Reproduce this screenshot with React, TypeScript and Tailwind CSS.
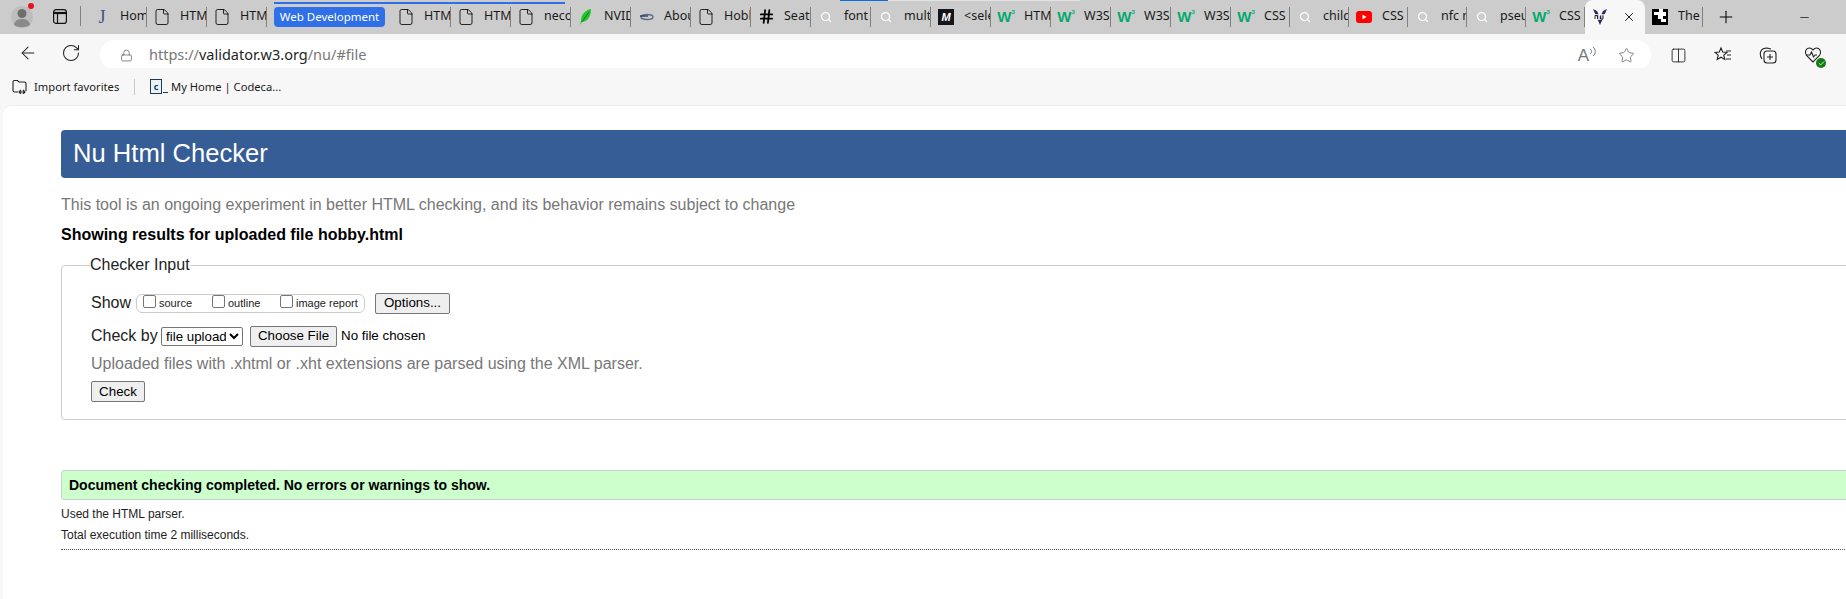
import React from 'react';
import { ArrowLeft, RotateCw, File, Search, Hash, Plus, X, Minus, Star, Columns2, Lock, Check } from 'lucide-react';

function W3Icon() {
  return (
    <span className="w-[16px] flex items-start justify-center text-[#04aa6d] font-['Liberation_Sans',sans-serif] font-bold leading-none">
      <span className="text-[15px]">W</span>
      <span className="text-[6px]">3</span>
    </span>
  );
}

function DocIcon() {
  return <File size={18} strokeWidth={1.1} className="text-black" />;
}

function SearchIcon() {
  return <Search size={12} strokeWidth={2.5} className="text-white" />;
}

function LeafIcon() {
  return (
    <svg width="16" height="18" viewBox="0 0 16 18">
      <path d="M13 1C7 2 3 7 3 13l-1 4 2-3c5 0 9-5 9-13z" fill="#22c52e" />
      <path d="M11 4 4 14" stroke="#0d7a17" strokeWidth="1" />
    </svg>
  );
}

function NvidiaIcon() {
  return (
    <svg width="16" height="8" viewBox="0 0 16 8">
      <ellipse cx="9" cy="4" rx="6" ry="2.5" fill="none" stroke="#5d6f8c" strokeWidth="1.4" />
      <path d="M2 3h8" stroke="#28405f" strokeWidth="1.4" />
    </svg>
  );
}

function JIcon() {
  return <span className="w-[16px] text-center text-[18px] leading-none text-[#3b5580] font-['Liberation_Serif',serif]">J</span>;
}

function MdnIcon() {
  return <span className="w-[16px] h-[16px] bg-[#15141a] text-white italic font-bold text-[11px] leading-[16px] text-center font-['Liberation_Sans',sans-serif]">M</span>;
}

function YoutubeIcon() {
  return (
    <svg width="16" height="12" viewBox="0 0 16 12">
      <rect width="16" height="12" rx="3" fill="#f00" />
      <path d="M6.5 3.5v5l4-2.5z" fill="#fff" />
    </svg>
  );
}

function NuIcon() {
  return (
    <svg width="16" height="18" viewBox="0 0 16 18">
      <path d="M1 1l7 16 7-16-4 2-3 6-3-6z" fill="#2c2a6b" />
      <rect x="1" y="6" width="14" height="6" fill="#fff" opacity="0.75" />
      <path d="M3 11V7.5h2.5V11M8.5 7.5V11H11V7.5" fill="none" stroke="#222" strokeWidth="1" />
    </svg>
  );
}

function PuzzleIcon() {
  return (
    <svg width="16" height="16" viewBox="0 0 16 16">
      <rect width="16" height="16" fill="#000" />
      <path d="M7 0h4v3h3v4h-3v3h3v3H9v-3H6V6H2V3h5z" fill="#fff" />
    </svg>
  );
}

function Tab({ icon, title, w = 'w-[60px]' }: { icon: React.ReactNode; title: string; w?: string }) {
  return (
    <div className={`${w} h-[34px] shrink-0 flex items-center pb-[1px]`}>
      <div className="w-[30px] mr-[3px] shrink-0 flex items-center justify-center">{icon}</div>
      <div className="flex-1 overflow-hidden whitespace-nowrap text-[12.5px] text-[#1a1a1a]">{title}</div>
      <div className="w-[1px] h-[20px] bg-[#808080] shrink-0" />
    </div>
  );
}

function TabStrip() {
  return (
    <div className="h-[34px] bg-[#cccccc] flex items-center font-['Noto_Sans',sans-serif] relative">
      {/* loading bar over the tab below */}
      <span className="absolute left-[840px] top-0 w-[48px] h-[1px] bg-[#0a6fd8]" />
      <span className="absolute left-[888px] top-0 w-[192px] h-[1px] bg-[#e4e4e4]" />
      <div className="w-[44px] flex justify-center relative">
        <svg width="22" height="24" viewBox="0 0 22 24">
          <circle cx="11" cy="12" r="11" fill="#bdbdbd" />
          <circle cx="11" cy="8.5" r="4.5" fill="#6e6e6e" />
          <path d="M3 20c1-5 4-6 8-6s7 1 8 6c-4 3-12 3-16 0z" fill="#8a8a8a" />
        </svg>
        <span className="absolute left-[28px] top-[-2px] w-[6px] h-[6px] rounded-full bg-[#e81123]" />
      </div>
      <div className="w-[43px] flex items-center pl-[9px] pb-[2px]">
        <svg width="14" height="15" viewBox="0 0 14 15" fill="none" stroke="#111" strokeWidth="1.2">
          <rect x="0.6" y="0.6" width="12.8" height="13.8" rx="2.5" />
          <path d="M0.6 4h12.8" strokeWidth="2.2" />
          <path d="M4.5 4v10.4" />
        </svg>
        <span className="w-[1px] h-[20px] bg-[#808080] ml-[13px]" />
      </div>
      <Tab icon={<JIcon />} title="Hom" />
      <Tab icon={<DocIcon />} title="HTM" />
      <Tab icon={<DocIcon />} title="HTM" />
      <div className="w-[124px] h-[34px] shrink-0 relative flex items-start pl-[7px] pt-[7px]">
        <span className="h-[20px] w-[111px] rounded-[4px] bg-[#2f6fe8] text-white text-[11.5px] leading-[20px] text-center whitespace-nowrap">Web Development</span>
        <span className="absolute left-[7px] top-[2px] w-[291px] h-[2px] bg-[#2f6fe8]" />
      </div>
      <Tab icon={<DocIcon />} title="HTM" />
      <Tab icon={<DocIcon />} title="HTM" />
      <Tab icon={<DocIcon />} title="neco" />
      <Tab icon={<LeafIcon />} title="NVID" />
      <Tab icon={<NvidiaIcon />} title="Abou" />
      <Tab icon={<DocIcon />} title="Hobb" />
      <Tab icon={<Hash size={17} strokeWidth={2.5} className="text-black" />} title="Seatt" />
      <Tab icon={<SearchIcon />} title="font s" />
      <Tab icon={<SearchIcon />} title="multi" />
      <Tab icon={<MdnIcon />} title="<sele" />
      <Tab icon={<W3Icon />} title="HTM" />
      <Tab icon={<W3Icon />} title="W3S" />
      <Tab icon={<W3Icon />} title="W3S" />
      <Tab icon={<W3Icon />} title="W3S" />
      <Tab icon={<W3Icon />} title="CSS" w="w-[59px]" />
      <Tab icon={<SearchIcon />} title="child" w="w-[59px]" />
      <Tab icon={<YoutubeIcon />} title="CSS" w="w-[59px]" />
      <Tab icon={<SearchIcon />} title="nfc n" w="w-[59px]" />
      <Tab icon={<SearchIcon />} title="pseu" w="w-[59px]" />
      <Tab icon={<W3Icon />} title="CSS" w="w-[59px]" />
      <div className="w-[60px] h-[34px] shrink-0 bg-[#f7f7f7] rounded-t-[8px] flex items-center justify-between pl-[7px] pr-[9px]">
        <NuIcon />
        <X size={14} strokeWidth={1.5} className="text-black" />
      </div>
      <Tab icon={<PuzzleIcon />} title="The" w="w-[58px]" />
      <div className="w-[45px] flex justify-center pl-[1px]">
        <Plus size={20} strokeWidth={1.25} className="text-black" />
      </div>
      <div className="flex-1 flex justify-start pl-[50px]">
        <Minus size={13} strokeWidth={1.25} className="text-black" />
      </div>
    </div>
  );
}

function ToolBar() {
  return (
    <div className="h-[34px] bg-[#f7f7f7] flex items-center font-['Noto_Sans',sans-serif]">
      <div className="w-[100px] shrink-0 flex items-center pl-[18px] gap-[23px] pt-[4px]">
        <ArrowLeft size={20} strokeWidth={1.25} className="text-[#222]" />
        <RotateCw size={20} strokeWidth={1.25} className="text-[#222]" />
      </div>
      <div className="w-[1551px] h-[30px] mt-[8px] bg-white rounded-full flex items-center pl-[20px] pr-[16px] shrink-0">
        <Lock size={13} strokeWidth={1.25} className="text-[#555]" />
        <span className="ml-[16px] text-[14.5px] leading-[20px] mt-[-2px] text-[#777] whitespace-nowrap">
          https://<span className="text-[#1f1f1f]">validator.w3.org</span>/nu/#file
        </span>
        <div className="flex-1" />
        <span className="text-[17px] leading-none text-[#777] font-['Liberation_Sans',sans-serif]">A</span>
        <svg width="8" height="12" viewBox="0 0 8 12" fill="none" stroke="#777" strokeWidth="1" className="mr-[21px] mb-[6px]">
          <path d="M1 8c2-1 2-4 0-5M4 10c3-2 3-7 0-9" />
        </svg>
        <Star size={17} strokeWidth={1.25} className="text-[#777]" />
      </div>
      <div className="flex-1 flex items-center pt-[8px] pl-[19px] gap-[27px]">
        <Columns2 size={17} strokeWidth={1.25} className="text-[#222]" />
        <svg width="18" height="18" viewBox="0 0 18 18" fill="none" stroke="#222" strokeWidth="1.1">
          <path d="M7 2l1.7 4 4.3.4-3.2 2.8 1 4.2L7 11.2l-3.8 2.2 1-4.2L1 6.400l4.300-.4z" />
          <path d="M12 5h5M13 9h4M12 13h5" />
        </svg>
        <svg width="18" height="18" viewBox="0 0 18 18" fill="none" stroke="#222" strokeWidth="1.1">
          <rect x="5" y="5" width="12" height="12" rx="3" />
          <path d="M11 8v6M8 11h6" />
          <path d="M3 13c-2-3-2-6-1-8 1-2 3-3 6-3l4 1" />
        </svg>
        <div className="relative">
          <svg width="18" height="18" viewBox="0 0 18 18" fill="none" stroke="#222" strokeWidth="1.1">
            <path d="M9 16 2.500 9.500C0 6.500 2 2 5.500 2 7 2 8.200 3 9 4c.8-1 2-2 3.500-2C16 2 18 6.500 15.500 9.500z" />
            <path d="M2 9h4l1.500-3 2 5 1.500-2h2" />
          </svg>
          <span className="absolute right-[-4px] bottom-[-4px] w-[10px] h-[10px] rounded-full bg-[#107c10] flex items-center justify-center">
            <Check size={7} strokeWidth={3} className="text-white" />
          </span>
        </div>
      </div>
    </div>
  );
}

function Bookmarks() {
  return (
    <div className="h-[37px] bg-[#f7f7f7] flex items-center pt-[1px] text-[11.2px] text-[#1a1a1a] font-['Noto_Sans',sans-serif]">
      <div className="pl-[12px] flex items-center">
        <svg width="15" height="15" viewBox="0 0 15 15" fill="none" stroke="#222" strokeWidth="1.1">
          <path d="M6 13H2.500A1.500 1.500 0 0 1 1 11.500V3a1.500 1.500 0 0 1 1.500-1.500h3L7 3h5.500A1.500 1.500 0 0 1 14 4.500V12" />
          <path d="M7 13h6M9 11l-2 2 2 2M11 11l2 2-2 2" />
        </svg>
        <span className="ml-[7px] w-[84px] whitespace-nowrap">Import favorites</span>
      </div>
      <span className="ml-[16px] w-[1px] h-[16px] bg-[#c8c8c8]" />
      <div className="ml-[15px] flex items-center">
        <span className="w-[12px] h-[15px] border border-[#1f3a52] bg-[#e8f2f7] text-[9px] leading-[13px] text-center font-bold text-[#1f3a52]">c</span>
        <span className="w-[5px] h-[1px] bg-[#1f3a52] mt-[12px] ml-[1px]" />
        <span className="ml-[3px] whitespace-nowrap">My Home | Codeca...</span>
      </div>
    </div>
  );
}

const btn = "bg-[#efefef] border border-[#767676] rounded-[2px] text-[13.33px] leading-none text-black font-['Liberation_Sans',sans-serif]";

function App() {
  return (
    <div className="w-[1846px] h-[599px] overflow-hidden bg-[#f7f7f7] flex flex-col font-['Liberation_Sans',sans-serif]">
      <TabStrip />
      <ToolBar />
      <Bookmarks />
      <div className="flex-1 ml-[3px] bg-white rounded-tl-[8px] pl-[58px] pt-[24px] border-t border-[#ececec] overflow-hidden">
        <div className="w-[1900px]">
          <h1 className="h-[48px] bg-[#365d95] rounded-[4px] text-white text-[25.6px] leading-[46px] pl-[12px] font-normal">Nu Html Checker</h1>
          <p className="mt-[17px] text-[16px] leading-[20px] text-[#777777] whitespace-nowrap">
            This tool is an ongoing experiment in better HTML checking, and its behavior remains subject to change
          </p>
          <p className="mt-[10px] text-[16px] leading-[20px] font-bold text-black whitespace-nowrap">
            Showing results for uploaded file hobby.html
          </p>
          <fieldset className="mt-[11px] h-[164px] border border-[#cccccc] rounded-[4px] pl-[29px]">
            <legend className="ml-[-1px] text-[16px] leading-[18px] text-[#222] px-0">Checker Input</legend>
            <div className="mt-[18px] h-[22px] flex items-center">
              <span className="text-[16px] text-[#222] w-[45px]">Show</span>
              <div className="w-[229px] h-[19px] border border-[#cccccc] rounded-[6px] flex items-center text-[11px] text-[#222] pl-[6px]">
                <input type="checkbox" readOnly className="w-[13px] h-[13px] appearance-none bg-white border border-[#767676] rounded-[2px] mb-[3px]" />
                <span className="ml-[3px] w-[53px]">source</span>
                <input type="checkbox" readOnly className="w-[13px] h-[13px] appearance-none bg-white border border-[#767676] rounded-[2px] mb-[3px]" />
                <span className="ml-[3px] w-[52px]">outline</span>
                <input type="checkbox" readOnly className="w-[13px] h-[13px] appearance-none bg-white border border-[#767676] rounded-[2px] mb-[3px]" />
                <span className="ml-[3px] whitespace-nowrap">image report</span>
              </div>
              <button className={`${btn} ml-[10px] w-[75px] h-[21px]`}>Options...</button>
            </div>
            <div className="mt-[11px] h-[22px] flex items-center">
              <span className="text-[16px] text-[#222] w-[70px] whitespace-nowrap">Check by</span>
              <select className="w-[82px] h-[19px] bg-white border border-[#767676] rounded-[2px] text-[13.33px] text-black">
                <option>file upload</option>
              </select>
              <button className={`${btn} ml-[7px] w-[87px] h-[21px]`}>Choose File</button>
              <span className="ml-[4px] text-[13.33px] text-black whitespace-nowrap">No file chosen</span>
            </div>
            <p className="mt-[7px] text-[16px] leading-[20px] text-[#777777] whitespace-nowrap">
              Uploaded files with .xhtml or .xht extensions are parsed using the XML parser.
            </p>
            <button className={`${btn} block mt-[7px] w-[54px] h-[21px]`}>Check</button>
          </fieldset>
          <div className="mt-[50px] h-[30px] bg-[#ccffcc] border border-[#cccccc] rounded-[3px] pl-[7px] text-[14px] leading-[28px] font-bold text-black whitespace-nowrap">
            Document checking completed. No errors or warnings to show.
          </div>
          <p className="mt-[6px] text-[12px] leading-[16px] text-[#222]">Used the HTML parser.</p>
          <p className="mt-[5px] text-[12px] leading-[16px] text-[#222]">Total execution time 2 milliseconds.</p>
          <div className="mt-[6px] border-t border-dotted border-[#555]" />
        </div>
      </div>
    </div>
  );
}

export default App;
